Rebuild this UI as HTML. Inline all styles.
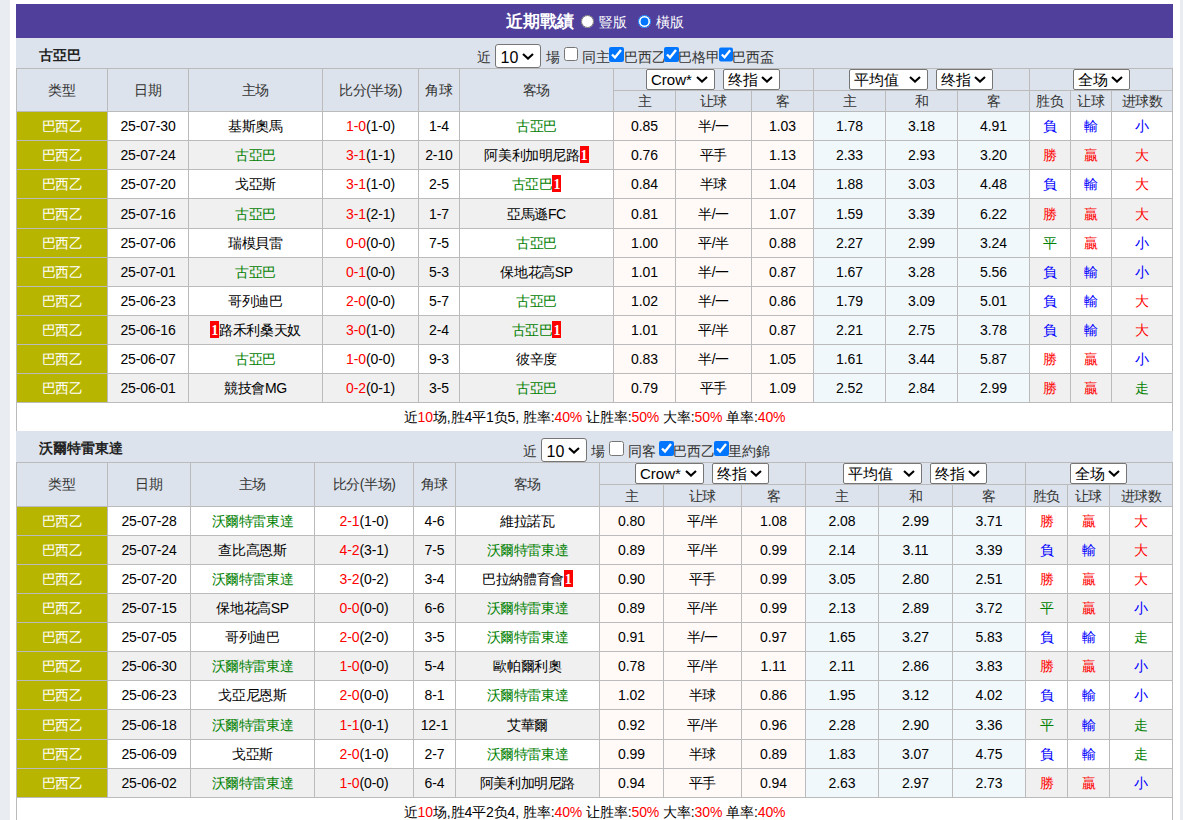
<!DOCTYPE html><html><head><meta charset="utf-8"><style>
html,body{margin:0;padding:0}
.c{position:absolute;display:flex;align-items:center;justify-content:center;white-space:nowrap;box-sizing:border-box}
.cj{letter-spacing:-0.4px}
.dg{letter-spacing:-0.1px}
.pj{padding-top:2px}
.pd{padding-top:0}
body{width:1183px;height:820px;overflow:hidden;position:relative;background:#e9edf2;font-family:"Liberation Sans",sans-serif;font-size:14px;color:#000}
.rc{display:inline-block;background:#f00;color:#fff;font-family:"Liberation Serif",serif;font-size:14px;font-weight:bold;width:9px;height:17px;line-height:19px;text-align:center;letter-spacing:0;position:relative;top:-1.5px;overflow:hidden}
.ttl{position:absolute;left:39px;height:30px;line-height:30px;font-size:14px;font-weight:bold;color:#222}
.ctrl{position:absolute;height:30px;display:flex;align-items:center;white-space:nowrap}
.t{position:absolute;font-size:13.5px;line-height:18px;color:#333;white-space:nowrap}
select{font-family:"Liberation Sans",sans-serif;margin:0;color:#000;background:#fff}
.sel{position:relative;box-sizing:border-box;border:1px solid #767676;border-radius:2px;background:#fff;font-size:15px;color:#000;line-height:19px;padding-left:4px;white-space:nowrap}
.sel .chev{position:absolute;right:6px;top:5.5px}
.sel10{position:absolute;box-sizing:border-box;width:46px;height:24px;border:1px solid #767676;border-radius:3px;background:#fff;font-size:16px;color:#000;line-height:25px;padding-left:4.5px}
.sel10 .chev{position:absolute;right:6px;top:8px}
.cb{position:absolute;width:13px;height:13px;margin:0}

.bar{position:absolute;left:506px;top:4px;height:34px;display:flex;align-items:center;color:#fff;white-space:nowrap}
.bar b{font-size:17px;font-weight:bold}
.bar .bt{font-size:14px;position:relative;top:2px}
.rad{width:13px;height:13px;margin:0 5px 0 7px}
.rad.on{margin-left:11px}
</style></head><body><div style="position:absolute;left:10px;top:0;width:1170px;height:820px;background:#fff"></div>
<div style="position:absolute;left:16px;top:4px;width:1157px;height:34px;background:#50409b"></div>
<div class="bar"><b>近期戰績</b><input type="radio" class="rad"><span class="bt">豎版</span><input type="radio" class="rad on" checked><span class="bt">橫版</span></div>
<div style="position:absolute;left:16px;top:38px;width:1157px;height:30px;background:#dde3ec"></div>
<div class="ttl" style="top:40px">古亞巴</div><span class="t" style="left:477px;top:49px">近</span><div class="sel10" style="left:495px;top:44px"><span>10</span><svg class="chev" width="12" height="7" viewBox="0 0 12 7"><path d="M1 1 L6 5.6 L11 1" fill="none" stroke="#000" stroke-width="2.1"/></svg></div><span class="t" style="left:546px;top:49px">場</span><input type="checkbox" class="cb" style="left:564px;top:47.3px;width:13.6px;height:13.6px"><span class="t" style="left:582.3px;top:49px">同主</span><input type="checkbox" class="cb" checked style="left:609px;top:47px;width:14.5px;height:14.5px"><span class="t" style="left:623.7px;top:49px">巴西乙</span><input type="checkbox" class="cb" checked style="left:664.3px;top:47px;width:14.5px;height:14.5px"><span class="t" style="left:678px;top:49px">巴格甲</span><input type="checkbox" class="cb" checked style="left:718.5px;top:47px;width:14.5px;height:14.5px"><span class="t" style="left:731.7px;top:49px">巴西盃</span>
<div style="position:absolute;left:16px;top:68px;width:1157px;height:43px;background:#dde3ec"></div>
<div class="c cj" style="left:17px;top:69px;width:90px;height:42px;color:#333;padding-top:2px">类型</div>
<div class="c cj" style="left:108px;top:69px;width:80px;height:42px;color:#333;padding-top:2px">日期</div>
<div class="c cj" style="left:189px;top:69px;width:133px;height:42px;color:#333;padding-top:2px">主场</div>
<div class="c cj" style="left:323px;top:69px;width:95px;height:42px;color:#333;padding-top:2px">比分(半场)</div>
<div class="c cj" style="left:419px;top:69px;width:40px;height:42px;color:#333;padding-top:2px">角球</div>
<div class="c cj" style="left:460px;top:69px;width:153px;height:42px;color:#333;padding-top:2px">客场</div>
<div class="c cj" style="left:614px;top:91px;width:61px;height:20px;color:#333;padding-top:2px">主</div>
<div class="c cj" style="left:676px;top:91px;width:75px;height:20px;color:#333;padding-top:2px">让球</div>
<div class="c cj" style="left:752px;top:91px;width:61px;height:20px;color:#333;padding-top:2px">客</div>
<div class="c cj" style="left:814px;top:91px;width:71px;height:20px;color:#333;padding-top:2px">主</div>
<div class="c cj" style="left:886px;top:91px;width:71px;height:20px;color:#333;padding-top:2px">和</div>
<div class="c cj" style="left:958px;top:91px;width:71px;height:20px;color:#333;padding-top:2px">客</div>
<div class="c cj" style="left:1030px;top:91px;width:40px;height:20px;color:#333;padding-top:2px">胜负</div>
<div class="c cj" style="left:1071px;top:91px;width:40px;height:20px;color:#333;padding-top:2px">让球</div>
<div class="c cj" style="left:1112px;top:91px;width:60px;height:20px;color:#333;padding-top:2px">进球数</div>
<div style="position:absolute;left:17px;top:112px;width:1155px;height:28px;background:#fff"></div>
<div class="c cj pj" style="left:17px;top:112px;width:90px;height:28px;background:#b8b500;color:#fff;">巴西乙</div>
<div class="c dg pd" style="left:108px;top:112px;width:80px;height:28px;">25-07-30</div>
<div class="c cj pj" style="left:189px;top:112px;width:133px;height:28px;">基斯奧馬</div>
<div class="c dg pd" style="left:323px;top:112px;width:95px;height:28px;"><span style="color:#ff0000">1-0</span>(1-0)</div>
<div class="c dg pd" style="left:419px;top:112px;width:40px;height:28px;">1-4</div>
<div class="c cj pj" style="left:460px;top:112px;width:153px;height:28px;"><span style="color:#008000">古亞巴</span></div>
<div class="c dg pd" style="left:614px;top:112px;width:61px;height:28px;background:#fffaf7;">0.85</div>
<div class="c cj pj" style="left:676px;top:112px;width:75px;height:28px;background:#fffaf7;">半/一</div>
<div class="c dg pd" style="left:752px;top:112px;width:61px;height:28px;background:#fffaf7;">1.03</div>
<div class="c dg pd" style="left:814px;top:112px;width:71px;height:28px;background:#f0f8fc;">1.78</div>
<div class="c dg pd" style="left:886px;top:112px;width:71px;height:28px;background:#f0f8fc;">3.18</div>
<div class="c dg pd" style="left:958px;top:112px;width:71px;height:28px;background:#f0f8fc;">4.91</div>
<div class="c cj pj" style="left:1030px;top:112px;width:40px;height:28px;color:#0000ff;">負</div>
<div class="c cj pj" style="left:1071px;top:112px;width:40px;height:28px;color:#0000ff;">輸</div>
<div class="c cj pj" style="left:1112px;top:112px;width:60px;height:28px;color:#0000ff;">小</div>
<div style="position:absolute;left:17px;top:141px;width:1155px;height:28px;background:#f0f0f0"></div>
<div class="c cj pj" style="left:17px;top:141px;width:90px;height:28px;background:#b8b500;color:#fff;">巴西乙</div>
<div class="c dg pd" style="left:108px;top:141px;width:80px;height:28px;">25-07-24</div>
<div class="c cj pj" style="left:189px;top:141px;width:133px;height:28px;"><span style="color:#008000">古亞巴</span></div>
<div class="c dg pd" style="left:323px;top:141px;width:95px;height:28px;"><span style="color:#ff0000">3-1</span>(1-1)</div>
<div class="c dg pd" style="left:419px;top:141px;width:40px;height:28px;">2-10</div>
<div class="c cj pj" style="left:460px;top:141px;width:153px;height:28px;">阿美利加明尼路<span class="rc">1</span></div>
<div class="c dg pd" style="left:614px;top:141px;width:61px;height:28px;background:#fffaf7;">0.76</div>
<div class="c cj pj" style="left:676px;top:141px;width:75px;height:28px;background:#fffaf7;">平手</div>
<div class="c dg pd" style="left:752px;top:141px;width:61px;height:28px;background:#fffaf7;">1.13</div>
<div class="c dg pd" style="left:814px;top:141px;width:71px;height:28px;background:#f0f8fc;">2.33</div>
<div class="c dg pd" style="left:886px;top:141px;width:71px;height:28px;background:#f0f8fc;">2.93</div>
<div class="c dg pd" style="left:958px;top:141px;width:71px;height:28px;background:#f0f8fc;">3.20</div>
<div class="c cj pj" style="left:1030px;top:141px;width:40px;height:28px;color:#ff0000;">勝</div>
<div class="c cj pj" style="left:1071px;top:141px;width:40px;height:28px;color:#ff0000;">贏</div>
<div class="c cj pj" style="left:1112px;top:141px;width:60px;height:28px;color:#ff0000;">大</div>
<div style="position:absolute;left:17px;top:170px;width:1155px;height:28px;background:#fff"></div>
<div class="c cj pj" style="left:17px;top:170px;width:90px;height:28px;background:#b8b500;color:#fff;">巴西乙</div>
<div class="c dg pd" style="left:108px;top:170px;width:80px;height:28px;">25-07-20</div>
<div class="c cj pj" style="left:189px;top:170px;width:133px;height:28px;">戈亞斯</div>
<div class="c dg pd" style="left:323px;top:170px;width:95px;height:28px;"><span style="color:#ff0000">3-1</span>(1-0)</div>
<div class="c dg pd" style="left:419px;top:170px;width:40px;height:28px;">2-5</div>
<div class="c cj pj" style="left:460px;top:170px;width:153px;height:28px;"><span style="color:#008000">古亞巴</span><span class="rc">1</span></div>
<div class="c dg pd" style="left:614px;top:170px;width:61px;height:28px;background:#fffaf7;">0.84</div>
<div class="c cj pj" style="left:676px;top:170px;width:75px;height:28px;background:#fffaf7;">半球</div>
<div class="c dg pd" style="left:752px;top:170px;width:61px;height:28px;background:#fffaf7;">1.04</div>
<div class="c dg pd" style="left:814px;top:170px;width:71px;height:28px;background:#f0f8fc;">1.88</div>
<div class="c dg pd" style="left:886px;top:170px;width:71px;height:28px;background:#f0f8fc;">3.03</div>
<div class="c dg pd" style="left:958px;top:170px;width:71px;height:28px;background:#f0f8fc;">4.48</div>
<div class="c cj pj" style="left:1030px;top:170px;width:40px;height:28px;color:#0000ff;">負</div>
<div class="c cj pj" style="left:1071px;top:170px;width:40px;height:28px;color:#0000ff;">輸</div>
<div class="c cj pj" style="left:1112px;top:170px;width:60px;height:28px;color:#ff0000;">大</div>
<div style="position:absolute;left:17px;top:199px;width:1155px;height:29px;background:#f0f0f0"></div>
<div class="c cj pj" style="left:17px;top:199px;width:90px;height:29px;background:#b8b500;color:#fff;">巴西乙</div>
<div class="c dg pd" style="left:108px;top:199px;width:80px;height:29px;">25-07-16</div>
<div class="c cj pj" style="left:189px;top:199px;width:133px;height:29px;"><span style="color:#008000">古亞巴</span></div>
<div class="c dg pd" style="left:323px;top:199px;width:95px;height:29px;"><span style="color:#ff0000">3-1</span>(2-1)</div>
<div class="c dg pd" style="left:419px;top:199px;width:40px;height:29px;">1-7</div>
<div class="c cj pj" style="left:460px;top:199px;width:153px;height:29px;">亞馬遜FC</div>
<div class="c dg pd" style="left:614px;top:199px;width:61px;height:29px;background:#fffaf7;">0.81</div>
<div class="c cj pj" style="left:676px;top:199px;width:75px;height:29px;background:#fffaf7;">半/一</div>
<div class="c dg pd" style="left:752px;top:199px;width:61px;height:29px;background:#fffaf7;">1.07</div>
<div class="c dg pd" style="left:814px;top:199px;width:71px;height:29px;background:#f0f8fc;">1.59</div>
<div class="c dg pd" style="left:886px;top:199px;width:71px;height:29px;background:#f0f8fc;">3.39</div>
<div class="c dg pd" style="left:958px;top:199px;width:71px;height:29px;background:#f0f8fc;">6.22</div>
<div class="c cj pj" style="left:1030px;top:199px;width:40px;height:29px;color:#ff0000;">勝</div>
<div class="c cj pj" style="left:1071px;top:199px;width:40px;height:29px;color:#ff0000;">贏</div>
<div class="c cj pj" style="left:1112px;top:199px;width:60px;height:29px;color:#ff0000;">大</div>
<div style="position:absolute;left:17px;top:229px;width:1155px;height:28px;background:#fff"></div>
<div class="c cj pj" style="left:17px;top:229px;width:90px;height:28px;background:#b8b500;color:#fff;">巴西乙</div>
<div class="c dg pd" style="left:108px;top:229px;width:80px;height:28px;">25-07-06</div>
<div class="c cj pj" style="left:189px;top:229px;width:133px;height:28px;">瑞模貝雷</div>
<div class="c dg pd" style="left:323px;top:229px;width:95px;height:28px;"><span style="color:#ff0000">0-0</span>(0-0)</div>
<div class="c dg pd" style="left:419px;top:229px;width:40px;height:28px;">7-5</div>
<div class="c cj pj" style="left:460px;top:229px;width:153px;height:28px;"><span style="color:#008000">古亞巴</span></div>
<div class="c dg pd" style="left:614px;top:229px;width:61px;height:28px;background:#fffaf7;">1.00</div>
<div class="c cj pj" style="left:676px;top:229px;width:75px;height:28px;background:#fffaf7;">平/半</div>
<div class="c dg pd" style="left:752px;top:229px;width:61px;height:28px;background:#fffaf7;">0.88</div>
<div class="c dg pd" style="left:814px;top:229px;width:71px;height:28px;background:#f0f8fc;">2.27</div>
<div class="c dg pd" style="left:886px;top:229px;width:71px;height:28px;background:#f0f8fc;">2.99</div>
<div class="c dg pd" style="left:958px;top:229px;width:71px;height:28px;background:#f0f8fc;">3.24</div>
<div class="c cj pj" style="left:1030px;top:229px;width:40px;height:28px;color:#008000;">平</div>
<div class="c cj pj" style="left:1071px;top:229px;width:40px;height:28px;color:#ff0000;">贏</div>
<div class="c cj pj" style="left:1112px;top:229px;width:60px;height:28px;color:#0000ff;">小</div>
<div style="position:absolute;left:17px;top:258px;width:1155px;height:28px;background:#f0f0f0"></div>
<div class="c cj pj" style="left:17px;top:258px;width:90px;height:28px;background:#b8b500;color:#fff;">巴西乙</div>
<div class="c dg pd" style="left:108px;top:258px;width:80px;height:28px;">25-07-01</div>
<div class="c cj pj" style="left:189px;top:258px;width:133px;height:28px;"><span style="color:#008000">古亞巴</span></div>
<div class="c dg pd" style="left:323px;top:258px;width:95px;height:28px;"><span style="color:#ff0000">0-1</span>(0-0)</div>
<div class="c dg pd" style="left:419px;top:258px;width:40px;height:28px;">5-3</div>
<div class="c cj pj" style="left:460px;top:258px;width:153px;height:28px;">保地花高SP</div>
<div class="c dg pd" style="left:614px;top:258px;width:61px;height:28px;background:#fffaf7;">1.01</div>
<div class="c cj pj" style="left:676px;top:258px;width:75px;height:28px;background:#fffaf7;">半/一</div>
<div class="c dg pd" style="left:752px;top:258px;width:61px;height:28px;background:#fffaf7;">0.87</div>
<div class="c dg pd" style="left:814px;top:258px;width:71px;height:28px;background:#f0f8fc;">1.67</div>
<div class="c dg pd" style="left:886px;top:258px;width:71px;height:28px;background:#f0f8fc;">3.28</div>
<div class="c dg pd" style="left:958px;top:258px;width:71px;height:28px;background:#f0f8fc;">5.56</div>
<div class="c cj pj" style="left:1030px;top:258px;width:40px;height:28px;color:#0000ff;">負</div>
<div class="c cj pj" style="left:1071px;top:258px;width:40px;height:28px;color:#0000ff;">輸</div>
<div class="c cj pj" style="left:1112px;top:258px;width:60px;height:28px;color:#0000ff;">小</div>
<div style="position:absolute;left:17px;top:287px;width:1155px;height:28px;background:#fff"></div>
<div class="c cj pj" style="left:17px;top:287px;width:90px;height:28px;background:#b8b500;color:#fff;">巴西乙</div>
<div class="c dg pd" style="left:108px;top:287px;width:80px;height:28px;">25-06-23</div>
<div class="c cj pj" style="left:189px;top:287px;width:133px;height:28px;">哥列迪巴</div>
<div class="c dg pd" style="left:323px;top:287px;width:95px;height:28px;"><span style="color:#ff0000">2-0</span>(0-0)</div>
<div class="c dg pd" style="left:419px;top:287px;width:40px;height:28px;">5-7</div>
<div class="c cj pj" style="left:460px;top:287px;width:153px;height:28px;"><span style="color:#008000">古亞巴</span></div>
<div class="c dg pd" style="left:614px;top:287px;width:61px;height:28px;background:#fffaf7;">1.02</div>
<div class="c cj pj" style="left:676px;top:287px;width:75px;height:28px;background:#fffaf7;">半/一</div>
<div class="c dg pd" style="left:752px;top:287px;width:61px;height:28px;background:#fffaf7;">0.86</div>
<div class="c dg pd" style="left:814px;top:287px;width:71px;height:28px;background:#f0f8fc;">1.79</div>
<div class="c dg pd" style="left:886px;top:287px;width:71px;height:28px;background:#f0f8fc;">3.09</div>
<div class="c dg pd" style="left:958px;top:287px;width:71px;height:28px;background:#f0f8fc;">5.01</div>
<div class="c cj pj" style="left:1030px;top:287px;width:40px;height:28px;color:#0000ff;">負</div>
<div class="c cj pj" style="left:1071px;top:287px;width:40px;height:28px;color:#0000ff;">輸</div>
<div class="c cj pj" style="left:1112px;top:287px;width:60px;height:28px;color:#ff0000;">大</div>
<div style="position:absolute;left:17px;top:316px;width:1155px;height:28px;background:#f0f0f0"></div>
<div class="c cj pj" style="left:17px;top:316px;width:90px;height:28px;background:#b8b500;color:#fff;">巴西乙</div>
<div class="c dg pd" style="left:108px;top:316px;width:80px;height:28px;">25-06-16</div>
<div class="c cj pj" style="left:189px;top:316px;width:133px;height:28px;"><span class="rc">1</span>路禾利桑天奴</div>
<div class="c dg pd" style="left:323px;top:316px;width:95px;height:28px;"><span style="color:#ff0000">3-0</span>(1-0)</div>
<div class="c dg pd" style="left:419px;top:316px;width:40px;height:28px;">2-4</div>
<div class="c cj pj" style="left:460px;top:316px;width:153px;height:28px;"><span style="color:#008000">古亞巴</span><span class="rc">1</span></div>
<div class="c dg pd" style="left:614px;top:316px;width:61px;height:28px;background:#fffaf7;">1.01</div>
<div class="c cj pj" style="left:676px;top:316px;width:75px;height:28px;background:#fffaf7;">平/半</div>
<div class="c dg pd" style="left:752px;top:316px;width:61px;height:28px;background:#fffaf7;">0.87</div>
<div class="c dg pd" style="left:814px;top:316px;width:71px;height:28px;background:#f0f8fc;">2.21</div>
<div class="c dg pd" style="left:886px;top:316px;width:71px;height:28px;background:#f0f8fc;">2.75</div>
<div class="c dg pd" style="left:958px;top:316px;width:71px;height:28px;background:#f0f8fc;">3.78</div>
<div class="c cj pj" style="left:1030px;top:316px;width:40px;height:28px;color:#0000ff;">負</div>
<div class="c cj pj" style="left:1071px;top:316px;width:40px;height:28px;color:#0000ff;">輸</div>
<div class="c cj pj" style="left:1112px;top:316px;width:60px;height:28px;color:#ff0000;">大</div>
<div style="position:absolute;left:17px;top:345px;width:1155px;height:28px;background:#fff"></div>
<div class="c cj pj" style="left:17px;top:345px;width:90px;height:28px;background:#b8b500;color:#fff;">巴西乙</div>
<div class="c dg pd" style="left:108px;top:345px;width:80px;height:28px;">25-06-07</div>
<div class="c cj pj" style="left:189px;top:345px;width:133px;height:28px;"><span style="color:#008000">古亞巴</span></div>
<div class="c dg pd" style="left:323px;top:345px;width:95px;height:28px;"><span style="color:#ff0000">1-0</span>(0-0)</div>
<div class="c dg pd" style="left:419px;top:345px;width:40px;height:28px;">9-3</div>
<div class="c cj pj" style="left:460px;top:345px;width:153px;height:28px;">彼辛度</div>
<div class="c dg pd" style="left:614px;top:345px;width:61px;height:28px;background:#fffaf7;">0.83</div>
<div class="c cj pj" style="left:676px;top:345px;width:75px;height:28px;background:#fffaf7;">半/一</div>
<div class="c dg pd" style="left:752px;top:345px;width:61px;height:28px;background:#fffaf7;">1.05</div>
<div class="c dg pd" style="left:814px;top:345px;width:71px;height:28px;background:#f0f8fc;">1.61</div>
<div class="c dg pd" style="left:886px;top:345px;width:71px;height:28px;background:#f0f8fc;">3.44</div>
<div class="c dg pd" style="left:958px;top:345px;width:71px;height:28px;background:#f0f8fc;">5.87</div>
<div class="c cj pj" style="left:1030px;top:345px;width:40px;height:28px;color:#ff0000;">勝</div>
<div class="c cj pj" style="left:1071px;top:345px;width:40px;height:28px;color:#ff0000;">贏</div>
<div class="c cj pj" style="left:1112px;top:345px;width:60px;height:28px;color:#0000ff;">小</div>
<div style="position:absolute;left:17px;top:374px;width:1155px;height:28px;background:#f0f0f0"></div>
<div class="c cj pj" style="left:17px;top:374px;width:90px;height:28px;background:#b8b500;color:#fff;">巴西乙</div>
<div class="c dg pd" style="left:108px;top:374px;width:80px;height:28px;">25-06-01</div>
<div class="c cj pj" style="left:189px;top:374px;width:133px;height:28px;">競技會MG</div>
<div class="c dg pd" style="left:323px;top:374px;width:95px;height:28px;"><span style="color:#ff0000">0-2</span>(0-1)</div>
<div class="c dg pd" style="left:419px;top:374px;width:40px;height:28px;">3-5</div>
<div class="c cj pj" style="left:460px;top:374px;width:153px;height:28px;"><span style="color:#008000">古亞巴</span></div>
<div class="c dg pd" style="left:614px;top:374px;width:61px;height:28px;background:#fffaf7;">0.79</div>
<div class="c cj pj" style="left:676px;top:374px;width:75px;height:28px;background:#fffaf7;">平手</div>
<div class="c dg pd" style="left:752px;top:374px;width:61px;height:28px;background:#fffaf7;">1.09</div>
<div class="c dg pd" style="left:814px;top:374px;width:71px;height:28px;background:#f0f8fc;">2.52</div>
<div class="c dg pd" style="left:886px;top:374px;width:71px;height:28px;background:#f0f8fc;">2.84</div>
<div class="c dg pd" style="left:958px;top:374px;width:71px;height:28px;background:#f0f8fc;">2.99</div>
<div class="c cj pj" style="left:1030px;top:374px;width:40px;height:28px;color:#ff0000;">勝</div>
<div class="c cj pj" style="left:1071px;top:374px;width:40px;height:28px;color:#ff0000;">贏</div>
<div class="c cj pj" style="left:1112px;top:374px;width:60px;height:28px;color:#008000;">走</div>
<div style="position:absolute;left:17px;top:403px;width:1155px;height:28px;background:#fff"></div>
<div class="c cj" style="left:17px;top:403px;width:1155px;height:28px;padding-top:2px"><span style="letter-spacing:-0.1px">近<span style="color:#ff0000">10</span>场,胜4平1负5, 胜率:<span style="color:#ff0000">40%</span> 让胜率:<span style="color:#ff0000">50%</span> 大率:<span style="color:#ff0000">50%</span> 单率:<span style="color:#ff0000">40%</span></span></div>
<div style="position:absolute;left:16px;top:68px;width:1157px;height:1px;background:#bbb"></div>
<div style="position:absolute;left:613px;top:90px;width:560px;height:1px;background:#bbb"></div>
<div style="position:absolute;left:16px;top:111px;width:1157px;height:1px;background:#bbb"></div>
<div style="position:absolute;left:16px;top:140px;width:1157px;height:1px;background:#bbb"></div>
<div style="position:absolute;left:16px;top:169px;width:1157px;height:1px;background:#bbb"></div>
<div style="position:absolute;left:16px;top:198px;width:1157px;height:1px;background:#bbb"></div>
<div style="position:absolute;left:16px;top:228px;width:1157px;height:1px;background:#bbb"></div>
<div style="position:absolute;left:16px;top:257px;width:1157px;height:1px;background:#bbb"></div>
<div style="position:absolute;left:16px;top:286px;width:1157px;height:1px;background:#bbb"></div>
<div style="position:absolute;left:16px;top:315px;width:1157px;height:1px;background:#bbb"></div>
<div style="position:absolute;left:16px;top:344px;width:1157px;height:1px;background:#bbb"></div>
<div style="position:absolute;left:16px;top:373px;width:1157px;height:1px;background:#bbb"></div>
<div style="position:absolute;left:16px;top:402px;width:1157px;height:1px;background:#bbb"></div>
<div style="position:absolute;left:16px;top:431px;width:1157px;height:1px;background:#bbb"></div>
<div style="position:absolute;left:16px;top:68px;width:1px;height:364px;background:#bbb"></div>
<div style="position:absolute;left:107px;top:68px;width:1px;height:335px;background:#bbb"></div>
<div style="position:absolute;left:188px;top:68px;width:1px;height:335px;background:#bbb"></div>
<div style="position:absolute;left:322px;top:68px;width:1px;height:335px;background:#bbb"></div>
<div style="position:absolute;left:418px;top:68px;width:1px;height:335px;background:#bbb"></div>
<div style="position:absolute;left:459px;top:68px;width:1px;height:335px;background:#bbb"></div>
<div style="position:absolute;left:613px;top:68px;width:1px;height:335px;background:#bbb"></div>
<div style="position:absolute;left:675px;top:90px;width:1px;height:313px;background:#bbb"></div>
<div style="position:absolute;left:751px;top:90px;width:1px;height:313px;background:#bbb"></div>
<div style="position:absolute;left:813px;top:68px;width:1px;height:335px;background:#bbb"></div>
<div style="position:absolute;left:885px;top:90px;width:1px;height:313px;background:#bbb"></div>
<div style="position:absolute;left:957px;top:90px;width:1px;height:313px;background:#bbb"></div>
<div style="position:absolute;left:1029px;top:68px;width:1px;height:335px;background:#bbb"></div>
<div style="position:absolute;left:1070px;top:90px;width:1px;height:313px;background:#bbb"></div>
<div style="position:absolute;left:1111px;top:90px;width:1px;height:313px;background:#bbb"></div>
<div style="position:absolute;left:1172px;top:68px;width:1px;height:364px;background:#bbb"></div>
<div style="position:absolute;left:646px;top:69px"><div class="sel" style="width:69px;height:21px"><span>Crow*</span><svg class="chev" width="12" height="7" viewBox="0 0 12 7"><path d="M1 1 L6 5.6 L11 1" fill="none" stroke="#000" stroke-width="2.1"/></svg></div></div><div style="position:absolute;left:723px;top:69px"><div class="sel" style="width:57px;height:21px"><span>终指</span><svg class="chev" width="12" height="7" viewBox="0 0 12 7"><path d="M1 1 L6 5.6 L11 1" fill="none" stroke="#000" stroke-width="2.1"/></svg></div></div><div style="position:absolute;left:849px;top:69px"><div class="sel" style="width:79px;height:21px"><span>平均值</span><svg class="chev" width="12" height="7" viewBox="0 0 12 7"><path d="M1 1 L6 5.6 L11 1" fill="none" stroke="#000" stroke-width="2.1"/></svg></div></div><div style="position:absolute;left:936px;top:69px"><div class="sel" style="width:57px;height:21px"><span>终指</span><svg class="chev" width="12" height="7" viewBox="0 0 12 7"><path d="M1 1 L6 5.6 L11 1" fill="none" stroke="#000" stroke-width="2.1"/></svg></div></div><div style="position:absolute;left:1073px;top:69px"><div class="sel" style="width:57px;height:21px"><span>全场</span><svg class="chev" width="12" height="7" viewBox="0 0 12 7"><path d="M1 1 L6 5.6 L11 1" fill="none" stroke="#000" stroke-width="2.1"/></svg></div></div>
<div style="position:absolute;left:16px;top:431px;width:1157px;height:31px;background:#dde3ec"></div>
<div class="ttl" style="top:433px">沃爾特雷東達</div><span class="t" style="left:522.6px;top:442.5px">近</span><div class="sel10" style="left:541px;top:438px"><span>10</span><svg class="chev" width="12" height="7" viewBox="0 0 12 7"><path d="M1 1 L6 5.6 L11 1" fill="none" stroke="#000" stroke-width="2.1"/></svg></div><span class="t" style="left:591.3px;top:442.5px">場</span><input type="checkbox" class="cb" style="left:609px;top:441px;width:14.7px;height:14.7px"><span class="t" style="left:627.8px;top:442.5px">同客</span><input type="checkbox" class="cb" checked style="left:659px;top:440.8px;width:15px;height:15px"><span class="t" style="left:673px;top:442.5px">巴西乙</span><input type="checkbox" class="cb" checked style="left:713.8px;top:440.8px;width:15px;height:15px"><span class="t" style="left:728px;top:442.5px">里約錦</span>
<div style="position:absolute;left:16px;top:462px;width:1157px;height:44px;background:#dde3ec"></div>
<div class="c cj" style="left:17px;top:463px;width:90px;height:43px;color:#333;padding-top:0px">类型</div>
<div class="c cj" style="left:108px;top:463px;width:82px;height:43px;color:#333;padding-top:0px">日期</div>
<div class="c cj" style="left:191px;top:463px;width:123px;height:43px;color:#333;padding-top:0px">主场</div>
<div class="c cj" style="left:315px;top:463px;width:98px;height:43px;color:#333;padding-top:0px">比分(半场)</div>
<div class="c cj" style="left:414px;top:463px;width:41px;height:43px;color:#333;padding-top:0px">角球</div>
<div class="c cj" style="left:456px;top:463px;width:143px;height:43px;color:#333;padding-top:0px">客场</div>
<div class="c cj" style="left:600px;top:485px;width:63px;height:21px;color:#333;padding-top:2px">主</div>
<div class="c cj" style="left:664px;top:485px;width:77px;height:21px;color:#333;padding-top:2px">让球</div>
<div class="c cj" style="left:742px;top:485px;width:63px;height:21px;color:#333;padding-top:2px">客</div>
<div class="c cj" style="left:806px;top:485px;width:72px;height:21px;color:#333;padding-top:2px">主</div>
<div class="c cj" style="left:879px;top:485px;width:73px;height:21px;color:#333;padding-top:2px">和</div>
<div class="c cj" style="left:953px;top:485px;width:72px;height:21px;color:#333;padding-top:2px">客</div>
<div class="c cj" style="left:1026px;top:485px;width:41px;height:21px;color:#333;padding-top:2px">胜负</div>
<div class="c cj" style="left:1068px;top:485px;width:41px;height:21px;color:#333;padding-top:2px">让球</div>
<div class="c cj" style="left:1110px;top:485px;width:62px;height:21px;color:#333;padding-top:2px">进球数</div>
<div style="position:absolute;left:17px;top:507px;width:1155px;height:28px;background:#fff"></div>
<div class="c cj pj" style="left:17px;top:507px;width:90px;height:28px;background:#b8b500;color:#fff;">巴西乙</div>
<div class="c dg pd" style="left:108px;top:507px;width:82px;height:28px;">25-07-28</div>
<div class="c cj pj" style="left:191px;top:507px;width:123px;height:28px;"><span style="color:#008000">沃爾特雷東達</span></div>
<div class="c dg pd" style="left:315px;top:507px;width:98px;height:28px;"><span style="color:#ff0000">2-1</span>(1-0)</div>
<div class="c dg pd" style="left:414px;top:507px;width:41px;height:28px;">4-6</div>
<div class="c cj pj" style="left:456px;top:507px;width:143px;height:28px;">維拉諾瓦</div>
<div class="c dg pd" style="left:600px;top:507px;width:63px;height:28px;background:#fffaf7;">0.80</div>
<div class="c cj pj" style="left:664px;top:507px;width:77px;height:28px;background:#fffaf7;">平/半</div>
<div class="c dg pd" style="left:742px;top:507px;width:63px;height:28px;background:#fffaf7;">1.08</div>
<div class="c dg pd" style="left:806px;top:507px;width:72px;height:28px;background:#f0f8fc;">2.08</div>
<div class="c dg pd" style="left:879px;top:507px;width:73px;height:28px;background:#f0f8fc;">2.99</div>
<div class="c dg pd" style="left:953px;top:507px;width:72px;height:28px;background:#f0f8fc;">3.71</div>
<div class="c cj pj" style="left:1026px;top:507px;width:41px;height:28px;color:#ff0000;">勝</div>
<div class="c cj pj" style="left:1068px;top:507px;width:41px;height:28px;color:#ff0000;">贏</div>
<div class="c cj pj" style="left:1110px;top:507px;width:62px;height:28px;color:#ff0000;">大</div>
<div style="position:absolute;left:17px;top:536px;width:1155px;height:28px;background:#f0f0f0"></div>
<div class="c cj pj" style="left:17px;top:536px;width:90px;height:28px;background:#b8b500;color:#fff;">巴西乙</div>
<div class="c dg pd" style="left:108px;top:536px;width:82px;height:28px;">25-07-24</div>
<div class="c cj pj" style="left:191px;top:536px;width:123px;height:28px;">查比高恩斯</div>
<div class="c dg pd" style="left:315px;top:536px;width:98px;height:28px;"><span style="color:#ff0000">4-2</span>(3-1)</div>
<div class="c dg pd" style="left:414px;top:536px;width:41px;height:28px;">7-5</div>
<div class="c cj pj" style="left:456px;top:536px;width:143px;height:28px;"><span style="color:#008000">沃爾特雷東達</span></div>
<div class="c dg pd" style="left:600px;top:536px;width:63px;height:28px;background:#fffaf7;">0.89</div>
<div class="c cj pj" style="left:664px;top:536px;width:77px;height:28px;background:#fffaf7;">平/半</div>
<div class="c dg pd" style="left:742px;top:536px;width:63px;height:28px;background:#fffaf7;">0.99</div>
<div class="c dg pd" style="left:806px;top:536px;width:72px;height:28px;background:#f0f8fc;">2.14</div>
<div class="c dg pd" style="left:879px;top:536px;width:73px;height:28px;background:#f0f8fc;">3.11</div>
<div class="c dg pd" style="left:953px;top:536px;width:72px;height:28px;background:#f0f8fc;">3.39</div>
<div class="c cj pj" style="left:1026px;top:536px;width:41px;height:28px;color:#0000ff;">負</div>
<div class="c cj pj" style="left:1068px;top:536px;width:41px;height:28px;color:#0000ff;">輸</div>
<div class="c cj pj" style="left:1110px;top:536px;width:62px;height:28px;color:#ff0000;">大</div>
<div style="position:absolute;left:17px;top:565px;width:1155px;height:28px;background:#fff"></div>
<div class="c cj pj" style="left:17px;top:565px;width:90px;height:28px;background:#b8b500;color:#fff;">巴西乙</div>
<div class="c dg pd" style="left:108px;top:565px;width:82px;height:28px;">25-07-20</div>
<div class="c cj pj" style="left:191px;top:565px;width:123px;height:28px;"><span style="color:#008000">沃爾特雷東達</span></div>
<div class="c dg pd" style="left:315px;top:565px;width:98px;height:28px;"><span style="color:#ff0000">3-2</span>(0-2)</div>
<div class="c dg pd" style="left:414px;top:565px;width:41px;height:28px;">3-4</div>
<div class="c cj pj" style="left:456px;top:565px;width:143px;height:28px;">巴拉納體育會<span class="rc">1</span></div>
<div class="c dg pd" style="left:600px;top:565px;width:63px;height:28px;background:#fffaf7;">0.90</div>
<div class="c cj pj" style="left:664px;top:565px;width:77px;height:28px;background:#fffaf7;">平手</div>
<div class="c dg pd" style="left:742px;top:565px;width:63px;height:28px;background:#fffaf7;">0.99</div>
<div class="c dg pd" style="left:806px;top:565px;width:72px;height:28px;background:#f0f8fc;">3.05</div>
<div class="c dg pd" style="left:879px;top:565px;width:73px;height:28px;background:#f0f8fc;">2.80</div>
<div class="c dg pd" style="left:953px;top:565px;width:72px;height:28px;background:#f0f8fc;">2.51</div>
<div class="c cj pj" style="left:1026px;top:565px;width:41px;height:28px;color:#ff0000;">勝</div>
<div class="c cj pj" style="left:1068px;top:565px;width:41px;height:28px;color:#ff0000;">贏</div>
<div class="c cj pj" style="left:1110px;top:565px;width:62px;height:28px;color:#ff0000;">大</div>
<div style="position:absolute;left:17px;top:594px;width:1155px;height:28px;background:#f0f0f0"></div>
<div class="c cj pj" style="left:17px;top:594px;width:90px;height:28px;background:#b8b500;color:#fff;">巴西乙</div>
<div class="c dg pd" style="left:108px;top:594px;width:82px;height:28px;">25-07-15</div>
<div class="c cj pj" style="left:191px;top:594px;width:123px;height:28px;">保地花高SP</div>
<div class="c dg pd" style="left:315px;top:594px;width:98px;height:28px;"><span style="color:#ff0000">0-0</span>(0-0)</div>
<div class="c dg pd" style="left:414px;top:594px;width:41px;height:28px;">6-6</div>
<div class="c cj pj" style="left:456px;top:594px;width:143px;height:28px;"><span style="color:#008000">沃爾特雷東達</span></div>
<div class="c dg pd" style="left:600px;top:594px;width:63px;height:28px;background:#fffaf7;">0.89</div>
<div class="c cj pj" style="left:664px;top:594px;width:77px;height:28px;background:#fffaf7;">平/半</div>
<div class="c dg pd" style="left:742px;top:594px;width:63px;height:28px;background:#fffaf7;">0.99</div>
<div class="c dg pd" style="left:806px;top:594px;width:72px;height:28px;background:#f0f8fc;">2.13</div>
<div class="c dg pd" style="left:879px;top:594px;width:73px;height:28px;background:#f0f8fc;">2.89</div>
<div class="c dg pd" style="left:953px;top:594px;width:72px;height:28px;background:#f0f8fc;">3.72</div>
<div class="c cj pj" style="left:1026px;top:594px;width:41px;height:28px;color:#008000;">平</div>
<div class="c cj pj" style="left:1068px;top:594px;width:41px;height:28px;color:#ff0000;">贏</div>
<div class="c cj pj" style="left:1110px;top:594px;width:62px;height:28px;color:#0000ff;">小</div>
<div style="position:absolute;left:17px;top:623px;width:1155px;height:28px;background:#fff"></div>
<div class="c cj pj" style="left:17px;top:623px;width:90px;height:28px;background:#b8b500;color:#fff;">巴西乙</div>
<div class="c dg pd" style="left:108px;top:623px;width:82px;height:28px;">25-07-05</div>
<div class="c cj pj" style="left:191px;top:623px;width:123px;height:28px;">哥列迪巴</div>
<div class="c dg pd" style="left:315px;top:623px;width:98px;height:28px;"><span style="color:#ff0000">2-0</span>(2-0)</div>
<div class="c dg pd" style="left:414px;top:623px;width:41px;height:28px;">3-5</div>
<div class="c cj pj" style="left:456px;top:623px;width:143px;height:28px;"><span style="color:#008000">沃爾特雷東達</span></div>
<div class="c dg pd" style="left:600px;top:623px;width:63px;height:28px;background:#fffaf7;">0.91</div>
<div class="c cj pj" style="left:664px;top:623px;width:77px;height:28px;background:#fffaf7;">半/一</div>
<div class="c dg pd" style="left:742px;top:623px;width:63px;height:28px;background:#fffaf7;">0.97</div>
<div class="c dg pd" style="left:806px;top:623px;width:72px;height:28px;background:#f0f8fc;">1.65</div>
<div class="c dg pd" style="left:879px;top:623px;width:73px;height:28px;background:#f0f8fc;">3.27</div>
<div class="c dg pd" style="left:953px;top:623px;width:72px;height:28px;background:#f0f8fc;">5.83</div>
<div class="c cj pj" style="left:1026px;top:623px;width:41px;height:28px;color:#0000ff;">負</div>
<div class="c cj pj" style="left:1068px;top:623px;width:41px;height:28px;color:#0000ff;">輸</div>
<div class="c cj pj" style="left:1110px;top:623px;width:62px;height:28px;color:#008000;">走</div>
<div style="position:absolute;left:17px;top:652px;width:1155px;height:28px;background:#f0f0f0"></div>
<div class="c cj pj" style="left:17px;top:652px;width:90px;height:28px;background:#b8b500;color:#fff;">巴西乙</div>
<div class="c dg pd" style="left:108px;top:652px;width:82px;height:28px;">25-06-30</div>
<div class="c cj pj" style="left:191px;top:652px;width:123px;height:28px;"><span style="color:#008000">沃爾特雷東達</span></div>
<div class="c dg pd" style="left:315px;top:652px;width:98px;height:28px;"><span style="color:#ff0000">1-0</span>(0-0)</div>
<div class="c dg pd" style="left:414px;top:652px;width:41px;height:28px;">5-4</div>
<div class="c cj pj" style="left:456px;top:652px;width:143px;height:28px;">歐帕爾利奧</div>
<div class="c dg pd" style="left:600px;top:652px;width:63px;height:28px;background:#fffaf7;">0.78</div>
<div class="c cj pj" style="left:664px;top:652px;width:77px;height:28px;background:#fffaf7;">平/半</div>
<div class="c dg pd" style="left:742px;top:652px;width:63px;height:28px;background:#fffaf7;">1.11</div>
<div class="c dg pd" style="left:806px;top:652px;width:72px;height:28px;background:#f0f8fc;">2.11</div>
<div class="c dg pd" style="left:879px;top:652px;width:73px;height:28px;background:#f0f8fc;">2.86</div>
<div class="c dg pd" style="left:953px;top:652px;width:72px;height:28px;background:#f0f8fc;">3.83</div>
<div class="c cj pj" style="left:1026px;top:652px;width:41px;height:28px;color:#ff0000;">勝</div>
<div class="c cj pj" style="left:1068px;top:652px;width:41px;height:28px;color:#ff0000;">贏</div>
<div class="c cj pj" style="left:1110px;top:652px;width:62px;height:28px;color:#0000ff;">小</div>
<div style="position:absolute;left:17px;top:681px;width:1155px;height:28px;background:#fff"></div>
<div class="c cj pj" style="left:17px;top:681px;width:90px;height:28px;background:#b8b500;color:#fff;">巴西乙</div>
<div class="c dg pd" style="left:108px;top:681px;width:82px;height:28px;">25-06-23</div>
<div class="c cj pj" style="left:191px;top:681px;width:123px;height:28px;">戈亞尼恩斯</div>
<div class="c dg pd" style="left:315px;top:681px;width:98px;height:28px;"><span style="color:#ff0000">2-0</span>(0-0)</div>
<div class="c dg pd" style="left:414px;top:681px;width:41px;height:28px;">8-1</div>
<div class="c cj pj" style="left:456px;top:681px;width:143px;height:28px;"><span style="color:#008000">沃爾特雷東達</span></div>
<div class="c dg pd" style="left:600px;top:681px;width:63px;height:28px;background:#fffaf7;">1.02</div>
<div class="c cj pj" style="left:664px;top:681px;width:77px;height:28px;background:#fffaf7;">半球</div>
<div class="c dg pd" style="left:742px;top:681px;width:63px;height:28px;background:#fffaf7;">0.86</div>
<div class="c dg pd" style="left:806px;top:681px;width:72px;height:28px;background:#f0f8fc;">1.95</div>
<div class="c dg pd" style="left:879px;top:681px;width:73px;height:28px;background:#f0f8fc;">3.12</div>
<div class="c dg pd" style="left:953px;top:681px;width:72px;height:28px;background:#f0f8fc;">4.02</div>
<div class="c cj pj" style="left:1026px;top:681px;width:41px;height:28px;color:#0000ff;">負</div>
<div class="c cj pj" style="left:1068px;top:681px;width:41px;height:28px;color:#0000ff;">輸</div>
<div class="c cj pj" style="left:1110px;top:681px;width:62px;height:28px;color:#0000ff;">小</div>
<div style="position:absolute;left:17px;top:710px;width:1155px;height:29px;background:#f0f0f0"></div>
<div class="c cj pj" style="left:17px;top:710px;width:90px;height:29px;background:#b8b500;color:#fff;">巴西乙</div>
<div class="c dg pd" style="left:108px;top:710px;width:82px;height:29px;">25-06-18</div>
<div class="c cj pj" style="left:191px;top:710px;width:123px;height:29px;"><span style="color:#008000">沃爾特雷東達</span></div>
<div class="c dg pd" style="left:315px;top:710px;width:98px;height:29px;"><span style="color:#ff0000">1-1</span>(0-1)</div>
<div class="c dg pd" style="left:414px;top:710px;width:41px;height:29px;">12-1</div>
<div class="c cj pj" style="left:456px;top:710px;width:143px;height:29px;">艾華爾</div>
<div class="c dg pd" style="left:600px;top:710px;width:63px;height:29px;background:#fffaf7;">0.92</div>
<div class="c cj pj" style="left:664px;top:710px;width:77px;height:29px;background:#fffaf7;">平/半</div>
<div class="c dg pd" style="left:742px;top:710px;width:63px;height:29px;background:#fffaf7;">0.96</div>
<div class="c dg pd" style="left:806px;top:710px;width:72px;height:29px;background:#f0f8fc;">2.28</div>
<div class="c dg pd" style="left:879px;top:710px;width:73px;height:29px;background:#f0f8fc;">2.90</div>
<div class="c dg pd" style="left:953px;top:710px;width:72px;height:29px;background:#f0f8fc;">3.36</div>
<div class="c cj pj" style="left:1026px;top:710px;width:41px;height:29px;color:#008000;">平</div>
<div class="c cj pj" style="left:1068px;top:710px;width:41px;height:29px;color:#0000ff;">輸</div>
<div class="c cj pj" style="left:1110px;top:710px;width:62px;height:29px;color:#008000;">走</div>
<div style="position:absolute;left:17px;top:740px;width:1155px;height:28px;background:#fff"></div>
<div class="c cj pj" style="left:17px;top:740px;width:90px;height:28px;background:#b8b500;color:#fff;">巴西乙</div>
<div class="c dg pd" style="left:108px;top:740px;width:82px;height:28px;">25-06-09</div>
<div class="c cj pj" style="left:191px;top:740px;width:123px;height:28px;">戈亞斯</div>
<div class="c dg pd" style="left:315px;top:740px;width:98px;height:28px;"><span style="color:#ff0000">2-0</span>(1-0)</div>
<div class="c dg pd" style="left:414px;top:740px;width:41px;height:28px;">2-7</div>
<div class="c cj pj" style="left:456px;top:740px;width:143px;height:28px;"><span style="color:#008000">沃爾特雷東達</span></div>
<div class="c dg pd" style="left:600px;top:740px;width:63px;height:28px;background:#fffaf7;">0.99</div>
<div class="c cj pj" style="left:664px;top:740px;width:77px;height:28px;background:#fffaf7;">半球</div>
<div class="c dg pd" style="left:742px;top:740px;width:63px;height:28px;background:#fffaf7;">0.89</div>
<div class="c dg pd" style="left:806px;top:740px;width:72px;height:28px;background:#f0f8fc;">1.83</div>
<div class="c dg pd" style="left:879px;top:740px;width:73px;height:28px;background:#f0f8fc;">3.07</div>
<div class="c dg pd" style="left:953px;top:740px;width:72px;height:28px;background:#f0f8fc;">4.75</div>
<div class="c cj pj" style="left:1026px;top:740px;width:41px;height:28px;color:#0000ff;">負</div>
<div class="c cj pj" style="left:1068px;top:740px;width:41px;height:28px;color:#0000ff;">輸</div>
<div class="c cj pj" style="left:1110px;top:740px;width:62px;height:28px;color:#008000;">走</div>
<div style="position:absolute;left:17px;top:769px;width:1155px;height:28px;background:#f0f0f0"></div>
<div class="c cj pj" style="left:17px;top:769px;width:90px;height:28px;background:#b8b500;color:#fff;">巴西乙</div>
<div class="c dg pd" style="left:108px;top:769px;width:82px;height:28px;">25-06-02</div>
<div class="c cj pj" style="left:191px;top:769px;width:123px;height:28px;"><span style="color:#008000">沃爾特雷東達</span></div>
<div class="c dg pd" style="left:315px;top:769px;width:98px;height:28px;"><span style="color:#ff0000">1-0</span>(0-0)</div>
<div class="c dg pd" style="left:414px;top:769px;width:41px;height:28px;">6-4</div>
<div class="c cj pj" style="left:456px;top:769px;width:143px;height:28px;">阿美利加明尼路</div>
<div class="c dg pd" style="left:600px;top:769px;width:63px;height:28px;background:#fffaf7;">0.94</div>
<div class="c cj pj" style="left:664px;top:769px;width:77px;height:28px;background:#fffaf7;">平手</div>
<div class="c dg pd" style="left:742px;top:769px;width:63px;height:28px;background:#fffaf7;">0.94</div>
<div class="c dg pd" style="left:806px;top:769px;width:72px;height:28px;background:#f0f8fc;">2.63</div>
<div class="c dg pd" style="left:879px;top:769px;width:73px;height:28px;background:#f0f8fc;">2.97</div>
<div class="c dg pd" style="left:953px;top:769px;width:72px;height:28px;background:#f0f8fc;">2.73</div>
<div class="c cj pj" style="left:1026px;top:769px;width:41px;height:28px;color:#ff0000;">勝</div>
<div class="c cj pj" style="left:1068px;top:769px;width:41px;height:28px;color:#ff0000;">贏</div>
<div class="c cj pj" style="left:1110px;top:769px;width:62px;height:28px;color:#0000ff;">小</div>
<div style="position:absolute;left:17px;top:798px;width:1155px;height:28px;background:#fff"></div>
<div class="c cj" style="left:17px;top:798px;width:1155px;height:28px;padding-top:2px"><span style="letter-spacing:-0.1px">近<span style="color:#ff0000">10</span>场,胜4平2负4, 胜率:<span style="color:#ff0000">40%</span> 让胜率:<span style="color:#ff0000">50%</span> 大率:<span style="color:#ff0000">30%</span> 单率:<span style="color:#ff0000">40%</span></span></div>
<div style="position:absolute;left:16px;top:462px;width:1157px;height:1px;background:#bbb"></div>
<div style="position:absolute;left:599px;top:484px;width:574px;height:1px;background:#bbb"></div>
<div style="position:absolute;left:16px;top:506px;width:1157px;height:1px;background:#bbb"></div>
<div style="position:absolute;left:16px;top:535px;width:1157px;height:1px;background:#bbb"></div>
<div style="position:absolute;left:16px;top:564px;width:1157px;height:1px;background:#bbb"></div>
<div style="position:absolute;left:16px;top:593px;width:1157px;height:1px;background:#bbb"></div>
<div style="position:absolute;left:16px;top:622px;width:1157px;height:1px;background:#bbb"></div>
<div style="position:absolute;left:16px;top:651px;width:1157px;height:1px;background:#bbb"></div>
<div style="position:absolute;left:16px;top:680px;width:1157px;height:1px;background:#bbb"></div>
<div style="position:absolute;left:16px;top:709px;width:1157px;height:1px;background:#bbb"></div>
<div style="position:absolute;left:16px;top:739px;width:1157px;height:1px;background:#bbb"></div>
<div style="position:absolute;left:16px;top:768px;width:1157px;height:1px;background:#bbb"></div>
<div style="position:absolute;left:16px;top:797px;width:1157px;height:1px;background:#bbb"></div>
<div style="position:absolute;left:16px;top:826px;width:1157px;height:1px;background:#bbb"></div>
<div style="position:absolute;left:16px;top:462px;width:1px;height:365px;background:#bbb"></div>
<div style="position:absolute;left:107px;top:462px;width:1px;height:336px;background:#bbb"></div>
<div style="position:absolute;left:190px;top:462px;width:1px;height:336px;background:#bbb"></div>
<div style="position:absolute;left:314px;top:462px;width:1px;height:336px;background:#bbb"></div>
<div style="position:absolute;left:413px;top:462px;width:1px;height:336px;background:#bbb"></div>
<div style="position:absolute;left:455px;top:462px;width:1px;height:336px;background:#bbb"></div>
<div style="position:absolute;left:599px;top:462px;width:1px;height:336px;background:#bbb"></div>
<div style="position:absolute;left:663px;top:484px;width:1px;height:314px;background:#bbb"></div>
<div style="position:absolute;left:741px;top:484px;width:1px;height:314px;background:#bbb"></div>
<div style="position:absolute;left:805px;top:462px;width:1px;height:336px;background:#bbb"></div>
<div style="position:absolute;left:878px;top:484px;width:1px;height:314px;background:#bbb"></div>
<div style="position:absolute;left:952px;top:484px;width:1px;height:314px;background:#bbb"></div>
<div style="position:absolute;left:1025px;top:462px;width:1px;height:336px;background:#bbb"></div>
<div style="position:absolute;left:1067px;top:484px;width:1px;height:314px;background:#bbb"></div>
<div style="position:absolute;left:1109px;top:484px;width:1px;height:314px;background:#bbb"></div>
<div style="position:absolute;left:1172px;top:462px;width:1px;height:365px;background:#bbb"></div>
<div style="position:absolute;left:635px;top:463px"><div class="sel" style="width:69px;height:21px"><span>Crow*</span><svg class="chev" width="12" height="7" viewBox="0 0 12 7"><path d="M1 1 L6 5.6 L11 1" fill="none" stroke="#000" stroke-width="2.1"/></svg></div></div><div style="position:absolute;left:712px;top:463px"><div class="sel" style="width:57px;height:21px"><span>终指</span><svg class="chev" width="12" height="7" viewBox="0 0 12 7"><path d="M1 1 L6 5.6 L11 1" fill="none" stroke="#000" stroke-width="2.1"/></svg></div></div><div style="position:absolute;left:843px;top:463px"><div class="sel" style="width:79px;height:21px"><span>平均值</span><svg class="chev" width="12" height="7" viewBox="0 0 12 7"><path d="M1 1 L6 5.6 L11 1" fill="none" stroke="#000" stroke-width="2.1"/></svg></div></div><div style="position:absolute;left:930px;top:463px"><div class="sel" style="width:57px;height:21px"><span>终指</span><svg class="chev" width="12" height="7" viewBox="0 0 12 7"><path d="M1 1 L6 5.6 L11 1" fill="none" stroke="#000" stroke-width="2.1"/></svg></div></div><div style="position:absolute;left:1070px;top:463px"><div class="sel" style="width:57px;height:21px"><span>全场</span><svg class="chev" width="12" height="7" viewBox="0 0 12 7"><path d="M1 1 L6 5.6 L11 1" fill="none" stroke="#000" stroke-width="2.1"/></svg></div></div></body></html>
